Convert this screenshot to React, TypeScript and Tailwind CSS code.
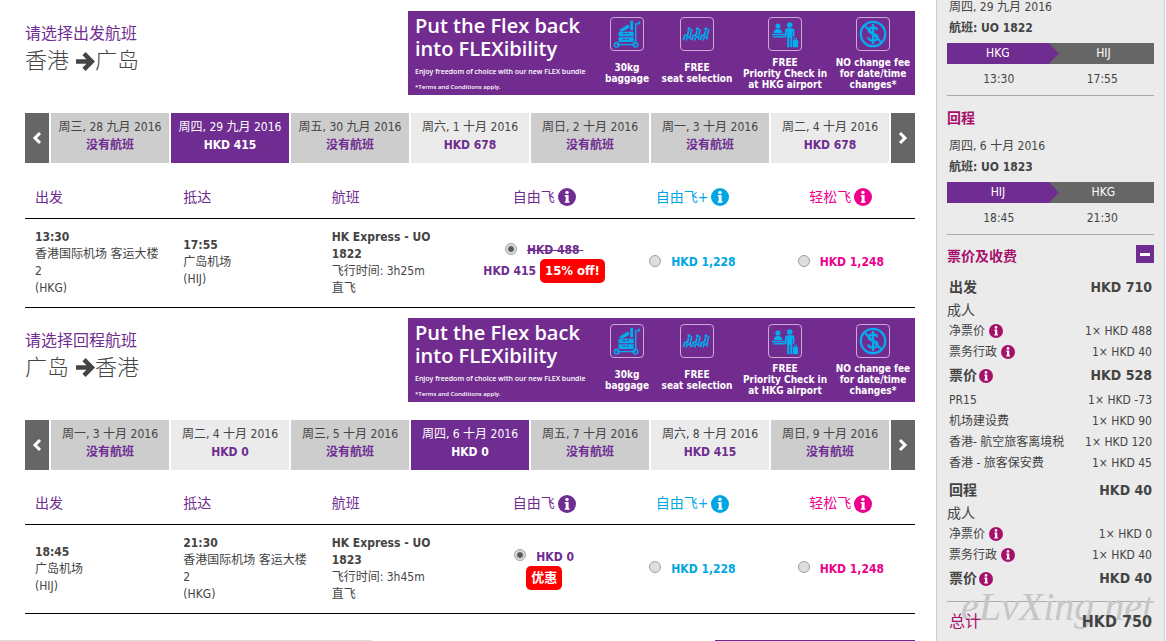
import React from "react";
import clsx from "clsx";

type DateOption = { date: string; price?: string; selected?: boolean };

type Stop = { time: string; airport: string; code: string };

type Flight = {
	id: string;
	title: string;
	from: string;
	to: string;
	dates: DateOption[];
	depart: Stop;
	arrive: Stop;
	flightNo: string;
	duration: string;
	oldPrice?: string;
	price: string;
	promo: string;
};

const flights: Flight[] = [
	{
		id: "outbound",
		title: "请选择出发航班",
		from: "香港",
		to: "广岛",
		dates: [
			{ date: "周三, 28 九月 2016" },
			{ date: "周四, 29 九月 2016", price: "HKD 415", selected: true },
			{ date: "周五, 30 九月 2016" },
			{ date: "周六, 1 十月 2016", price: "HKD 678" },
			{ date: "周日, 2 十月 2016" },
			{ date: "周一, 3 十月 2016" },
			{ date: "周二, 4 十月 2016", price: "HKD 678" },
		],
		depart: { time: "13:30", airport: "香港国际机场 客运大楼 2", code: "HKG" },
		arrive: { time: "17:55", airport: "广岛机场", code: "HIJ" },
		flightNo: "HK Express - UO 1822",
		duration: "3h25m",
		oldPrice: "HKD 488",
		price: "HKD 415",
		promo: "15% off!",
	},
	{
		id: "inbound",
		title: "请选择回程航班",
		from: "广岛",
		to: "香港",
		dates: [
			{ date: "周一, 3 十月 2016" },
			{ date: "周二, 4 十月 2016", price: "HKD 0" },
			{ date: "周三, 5 十月 2016" },
			{ date: "周四, 6 十月 2016", price: "HKD 0", selected: true },
			{ date: "周五, 7 十月 2016" },
			{ date: "周六, 8 十月 2016", price: "HKD 415" },
			{ date: "周日, 9 十月 2016" },
		],
		depart: { time: "18:45", airport: "广岛机场", code: "HIJ" },
		arrive: { time: "21:30", airport: "香港国际机场 客运大楼 2", code: "HKG" },
		flightNo: "HK Express - UO 1823",
		duration: "3h45m",
		price: "HKD 0",
		promo: "优惠",
	},
];

function InfoButton({ label, className }: { label: string; className: string }) {
	return (
		<button type="button" aria-label={label} className={clsx("shrink-0", className)}>
			<svg viewBox="0 0 18 18" className="block h-full w-full">
				<circle cx="9" cy="9" r="9" fill="currentColor" />
				<circle cx="9" cy="4.400" r="1.700" fill="#fff" />
				<path d="M6.800 7h3.800v6.200h.9v1.600H6.800v-1.600h.9V8.600h-.9z" fill="#fff" />
			</svg>
		</button>
	);
}

function Chevron({ d }: { d: string }) {
	return (
		<svg viewBox="0 0 10 14" className="h-[14px] w-[10px]" fill="none" stroke="#fff" strokeWidth="3">
			<path d={d} />
		</svg>
	);
}

function TrolleyIcon() {
	return (
		<svg viewBox="0 0 34 34" className="h-full w-full" fill="#00aeef">
			<path d="M9 12.500 18 7l2 3.200-7 3.800H9.500z" />
			<path d="M20.500 3h3v10h-3zM8 14.500h16v5H8zM8 20.500h16v5H8zM25.500 5.500h5v1.500h-3.500v18.500h-1.500z" />
			<circle cx="30" cy="5" r="1.200" />
			<path d="M6 27.500h20v1.500H6z" />
			<circle cx="6" cy="28.500" r="2.400" fill="none" stroke="#00aeef" strokeWidth="1.500" />
			<circle cx="26" cy="28.500" r="2.400" fill="none" stroke="#00aeef" strokeWidth="1.500" />
			<path d="M12.500 16h3v1.200h-3zM17 16h2v1.200h-2zM12.500 22h3v1.200h-3zM17 22h2v1.200h-2z" fill="#722c90" />
		</svg>
	);
}

function SeatsIcon() {
	return (
		<svg viewBox="0 0 34 34" className="h-full w-full" fill="none" stroke="#00aeef">
			{[0, 9, 18].map((x) => (
				<g key={x} transform={`translate(${x} 0)`}>
					<circle cx="8.500" cy="11.500" r="1.700" fill="#00aeef" stroke="none" />
					<path d="M8 13.500 6.800 18.500H4L2.500 23.500" strokeWidth="1.900" />
					<path d="M11.500 12 9.500 20.500H6.500L5.500 24M9.500 20.500 10 23" strokeWidth="1.700" />
				</g>
			))}
		</svg>
	);
}

function CheckInIcon() {
	return (
		<svg viewBox="0 0 34 34" className="h-full w-full" fill="#00aeef">
			<circle cx="9.500" cy="8.500" r="2.700" />
			<path d="M5 16c0-3 1.500-4.200 4.500-4.200S14 13 14 16zM3 16.800h15.500v1.600H3zM4.500 19h13v1.600h-13z" />
			<circle cx="22" cy="7.500" r="2.900" />
			<path d="M19.500 11h5c1.700 0 2.500 1 2.500 2.500V20h-1.600v-5.500h-.6V31h-2.200V21h-1v10h-2.300V14.500h-.5V20H17v-6.500c0-1.500.8-2.500 2.500-2.500z" />
			<path d="M25.500 23.500h1.300V21h2.800v2.500h1.300V31h-5.400zM27.800 22v1.500h1V22z" />
		</svg>
	);
}

function NoFeeIcon() {
	return (
		<svg viewBox="0 0 34 34" className="h-full w-full" fill="none" stroke="#00aeef">
			<circle cx="17" cy="17" r="13" strokeWidth="2.400" />
			<path d="M8 8l18 18" strokeWidth="2.200" />
			<path
				d="M21.500 12.800c-.5-2-2-2.800-4.500-2.800-2.700 0-4.500 1.200-4.500 3.300 0 4.700 9.300 2.200 9.300 7.200 0 2.300-2 3.500-4.800 3.500s-4.700-1.200-5-3.500M17 6.500V27.500"
				strokeWidth="2.400"
			/>
		</svg>
	);
}

const perks = [
	{ icon: <TrolleyIcon />, lines: ["30kg", "baggage"], width: "w-[60px]" },
	{ icon: <SeatsIcon />, lines: ["FREE", "seat selection"], width: "w-[80px]" },
	{ icon: <CheckInIcon />, lines: ["FREE", "Priority Check in", "at HKG airport"], width: "w-[96px]" },
	{ icon: <NoFeeIcon />, lines: ["NO change fee", "for date/time", "changes*"], width: "w-[80px]" },
];

function FlexBanner() {
	return (
		<div className="flex h-[84px] w-[507px] shrink-0 justify-between bg-[#722c90] pr-[2px] pl-[7px] text-white">
			<div className="whitespace-nowrap pt-[3px] font-['Open_Sans',sans-serif] font-semibold">
				<p className="text-[20px] leading-[23px]">
					Put the Flex back
					<br />
					into FLEXibility
				</p>
				<p className="mt-[7px] text-[7px] leading-[10px]">Enjoy freedom of choice with our new FLEX bundle</p>
				<p className="mt-[5px] text-[6px] leading-[10px]">*Terms and Conditions apply.</p>
			</div>
			<div className="flex pt-[6px]">
				{perks.map((perk) => (
					<div key={perk.lines[1]} className={clsx("flex flex-col items-center", perk.width)}>
						<div className="h-[34px] w-[34px] rounded-[4px] border border-[#c9a9d6]">{perk.icon}</div>
						<p className="flex h-[44px] flex-col justify-center whitespace-nowrap text-center text-[10px] leading-[11px] font-bold">
							{perk.lines.map((line) => (
								<span key={line}>{line}</span>
							))}
						</p>
					</div>
				))}
			</div>
		</div>
	);
}

function DatePicker({ dates }: { dates: DateOption[] }) {
	return (
		<div className="mt-[18px] flex h-[50px] gap-[2px]">
			<button type="button" aria-label="前几天" className="flex w-6 items-center justify-center bg-[#666]">
				<Chevron d="M8 2 3 7l5 5" />
			</button>
			{dates.map((d) => (
				<button
					key={d.date}
					type="button"
					className={clsx(
						"flex flex-1 flex-col items-center whitespace-nowrap pt-[5px] leading-[18px]",
						d.selected ? "bg-[#6f2c91] text-white" : d.price ? "bg-[#ebebeb]" : "bg-[#cdcdcd]",
					)}
				>
					<span>{d.date}</span>
					<span className={clsx("font-bold", !d.selected && "text-[#6f2c91]")}>{d.price ?? "没有航班"}</span>
				</button>
			))}
			<button type="button" aria-label="后几天" className="flex w-6 items-center justify-center bg-[#666]">
				<Chevron d="M2 2l5 5-5 5" />
			</button>
		</div>
	);
}

function FareRadio({ name, label, checked }: { name: string; label: string; checked?: boolean }) {
	return (
		<input
			type="radio"
			name={name}
			aria-label={label}
			defaultChecked={checked}
			className="mb-1 h-3 w-3 appearance-none rounded-full border border-[#a0a0a0] bg-[#dedede] checked:bg-[radial-gradient(circle,#555_0_2px,#e6e6e6_4px)]"
		/>
	);
}

function StopCell({ stop }: { stop: Stop }) {
	return (
		<td className="px-[10px]">
			<p className="font-bold">{stop.time}</p>
			<p>{stop.airport}</p>
			<p>({stop.code})</p>
		</td>
	);
}

function FareHeader({ name, className }: { name: string; className: string }) {
	return (
		<th className={clsx("pt-[14px] font-normal", className)}>
			<div className="flex items-center justify-center gap-[3px]">
				{name}
				<InfoButton label={`${name}说明`} className="h-[18px] w-[18px]" />
			</div>
		</th>
	);
}

function FlightSection({ flight }: { flight: Flight }) {
	return (
		<section>
			<div className="flex justify-between">
				<div className="pt-[13px]">
					<p className="text-[16px] leading-5 text-[#6f2c91]">{flight.title}</p>
					<h2 className="flex items-center text-[22px] leading-[34px] font-light">
						{flight.from}
						<svg viewBox="0 0 19 19" className="ml-[7px] h-[19px] w-[19px]" fill="none" stroke="#444" strokeWidth="4.500">
							<path d="M0 9.500h14M8 1.700l7.800 7.800L8 17.300" />
						</svg>
						{flight.to}
					</h2>
				</div>
				<FlexBanner />
			</div>

			<DatePicker dates={flight.dates} />

			<table className="w-full table-fixed border-collapse text-left leading-[17px]">
				<thead>
					<tr className="h-[55px] border-b border-black text-[14px] text-[#6f2c91]">
						<th className="px-[10px] pt-[14px] font-normal">出发</th>
						<th className="px-[10px] pt-[14px] font-normal">抵达</th>
						<th className="px-[10px] pt-[14px] font-normal">航班</th>
						<FareHeader name="自由飞" className="text-[#6f2c91]" />
						<FareHeader name="自由飞+" className="text-[#00a5e3]" />
						<FareHeader name="轻松飞" className="text-[#ec008c]" />
					</tr>
				</thead>
				<tbody>
					<tr className="h-[89px] border-b border-black">
						<StopCell stop={flight.depart} />
						<StopCell stop={flight.arrive} />
						<td className="px-[10px]">
							<p className="font-bold">{flight.flightNo}</p>
							<p>飞行时间: {flight.duration}</p>
							<p>直飞</p>
						</td>
						<td className="font-bold text-[#6f2c91]">
							<div className="flex items-center justify-center gap-[10px]">
								<FareRadio name={flight.id} label={`自由飞 ${flight.price}`} checked />
								{flight.oldPrice ? <del>{flight.oldPrice}&nbsp;</del> : flight.price}
							</div>
							<div className="flex items-center justify-center gap-1">
								{flight.oldPrice ? flight.price : null}
								<span className="rounded-[5px] bg-[#f00] px-[5px] text-[13px] leading-6 text-white">{flight.promo}</span>
							</div>
						</td>
						<td className="font-bold text-[#00a5e3]">
							<div className="flex items-center justify-center gap-[10px]">
								<FareRadio name={flight.id} label="自由飞+ HKD 1,228" />
								HKD 1,228
							</div>
						</td>
						<td className="font-bold text-[#ec008c]">
							<div className="flex items-center justify-center gap-[10px]">
								<FareRadio name={flight.id} label="轻松飞 HKD 1,248" />
								HKD 1,248
							</div>
						</td>
					</tr>
				</tbody>
			</table>
		</section>
	);
}

type LegProps = { date: string; flightNo: string; from: string; to: string; depart: string; arrive: string };

function Leg({ date, flightNo, from, to, depart, arrive }: LegProps) {
	return (
		<div className="border-b border-[#aaa]">
			<p className="pl-[2px] leading-[21px]">{date}</p>
			<p className="pl-[2px] leading-[21px] font-bold">航班: {flightNo}</p>
			<div className="mt-1 flex bg-[#666] text-center leading-[21px] text-white">
				<span className="w-[54%] bg-[#6f2c91] pr-[10px] [clip-path:polygon(0_0,calc(100%-10px)_0,100%_50%,calc(100%-10px)_100%,0_100%)]">
					{from}
				</span>
				<span className="flex-1 pr-[6px]">{to}</span>
			</div>
			<div className="flex text-center leading-[31px]">
				<span className="flex-1">{depart}</span>
				<span className="flex-1">{arrive}</span>
			</div>
		</div>
	);
}

type FareLine = { label: string; value: string; info?: boolean; total?: boolean };

const outboundFares: FareLine[] = [
	{ label: "净票价", value: "1× HKD 488", info: true },
	{ label: "票务行政", value: "1× HKD 40", info: true },
	{ label: "票价", value: "HKD 528", info: true, total: true },
	{ label: "PR15", value: "1× HKD -73" },
	{ label: "机场建设费", value: "1× HKD 90" },
	{ label: "香港- 航空旅客离境税", value: "1× HKD 120" },
	{ label: "香港 - 旅客保安费", value: "1× HKD 45" },
];

const inboundFares: FareLine[] = [
	{ label: "净票价", value: "1× HKD 0", info: true },
	{ label: "票务行政", value: "1× HKD 40", info: true },
	{ label: "票价", value: "HKD 40", info: true, total: true },
];

function FareGroup({ title, amount, lines }: { title: string; amount: string; lines: FareLine[] }) {
	return (
		<div>
			<div className="flex h-[31px] items-center justify-between px-[2px] pt-[3px] text-[14px] font-bold">
				<h4>{title}</h4>
				<span>{amount}</span>
			</div>
			<p className="text-[14px] leading-[19px]">成人</p>
			<dl>
				{lines.map((line) => (
					<div
						key={line.label}
						className={clsx(
							"flex items-center justify-between whitespace-nowrap px-[2px]",
							line.total ? "h-[27px] text-[14px] font-bold" : "h-[21px]",
						)}
					>
						<dt className={clsx("flex items-center", line.total ? "gap-[2px]" : "gap-1")}>
							{line.label}
							{line.info ? <InfoButton label={`${line.label}说明`} className="h-[14px] w-[14px] text-[#a6106b]" /> : null}
						</dt>
						<dd>{line.value}</dd>
					</div>
				))}
			</dl>
		</div>
	);
}

function Summary() {
	return (
		<aside className="mr-px w-[229px] shrink-0 overflow-hidden border-x border-[#c5cfe0] bg-[#ebebeb] px-[10px]">
			<div className="-mt-[3px]">
				<Leg date="周四, 29 九月 2016" flightNo="UO 1822" from="HKG" to="HIJ" depart="13:30" arrive="17:55" />
				<h3 className="h-10 pt-3 text-[14px] leading-5 font-bold text-[#a6106b]">回程</h3>
				<Leg date="周四, 6 十月 2016" flightNo="UO 1823" from="HIJ" to="HKG" depart="18:45" arrive="21:30" />

				<div className="flex h-[35px] justify-between pt-[10px]">
					<h3 className="text-[14px] leading-[22px] font-bold text-[#a6106b]">票价及收费</h3>
					<button type="button" aria-label="收起" className="flex h-[18px] w-[18px] items-center justify-center bg-[#6f2c91]">
						<span className="h-[3px] w-[10px] bg-white" />
					</button>
				</div>

				<FareGroup title="出发" amount="HKD 710" lines={outboundFares} />
				<FareGroup title="回程" amount="HKD 40" lines={inboundFares} />

				<div className="relative mt-[9px] flex h-10 items-center justify-between border-t border-[#aaa] px-[2px] text-[16px]">
					<span
						aria-hidden="true"
						className="absolute top-[-17px] left-[14px] font-['Liberation_Serif',serif] text-[40px] leading-[44px] text-[#c6c6c6] italic"
					>
						eLvXing.net
					</span>
					<span className="relative text-[#a6106b]">总计</span>
					<span className="relative font-bold">HKD 750</span>
				</div>
			</div>
		</aside>
	);
}

export default function App() {
	return (
		<div className="flex min-h-screen bg-white font-['DejaVu_Sans_Condensed','Noto_Sans_CJK_SC',sans-serif] text-[12px] text-[#444]">
			<main className="flex min-w-0 flex-1 flex-col justify-between">
				<div className="flex flex-col gap-[10px] pt-[11px] pr-[21px] pl-[25px]">
					{flights.map((flight) => (
						<FlightSection key={flight.id} flight={flight} />
					))}
				</div>
				<div className="flex justify-between pr-[21px]">
					<div className="h-px w-[372px] rounded-tr bg-[#dcdcdc]" />
					<div className="h-px w-[200px] bg-[#6f2c91]" />
				</div>
			</main>
			<Summary />
		</div>
	);
}
